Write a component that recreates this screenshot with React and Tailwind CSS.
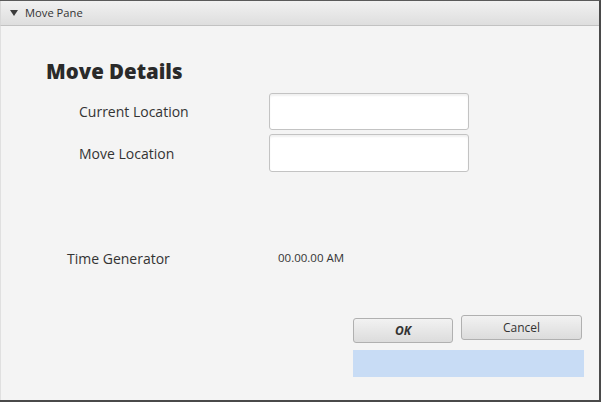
export default function App() {
  return (
    <div
      className="w-[601px] h-[402px] bg-[#f4f4f4] border-t border-t-[#5a5a5a] border-r-2 border-r-[#4a4a4a] border-b-2 border-b-[#4a4a4a] flex flex-col text-[#333]"
      style={{ fontFamily: '"Open Sans", "Noto Sans", sans-serif' }}
    >
      {/* Title bar */}
      <div className="h-[25px] shrink-0 flex items-center bg-gradient-to-b from-[#f1f1f1] to-[#dedede] border-b border-[#c2c2c2] border-l border-l-[#d8d8d8]">
        <span className="ml-[9px] w-0 h-0 border-l-[4px] border-r-[4px] border-t-[6px] border-l-transparent border-r-transparent border-t-[#3c3c3c]" />
        <span className="ml-[7px] text-[11.2px] leading-none text-[#333]">Move Pane</span>
      </div>

      {/* Content */}
      <div className="flex-1 flex flex-col border-l border-l-[#e0e0e0]">
        <h1 className="ml-[45px] mt-[32px] text-[20.4px] font-extrabold leading-[26px] text-[#2a2a2a]">
          Move Details
        </h1>

        <div className="mt-[9px] flex flex-col gap-[4px]">
          <div className="flex items-center">
            <span className="ml-[78px] w-[190px] text-[14px]">Current Location</span>
            <input className="w-[200px] h-[37px] bg-white rounded-[3px] border border-[#c3c3c3] shadow-[inset_0_2px_2px_rgba(0,0,0,0.06)] outline-none" />
          </div>
          <div className="flex items-center">
            <span className="ml-[78px] w-[190px] text-[14px]">Move Location</span>
            <input className="w-[200px] h-[38px] bg-white rounded-[3px] border border-[#c3c3c3] shadow-[inset_0_2px_2px_rgba(0,0,0,0.06)] outline-none" />
          </div>
        </div>

        <div className="mt-[76px] flex items-center h-[20px]">
          <span className="ml-[66px] w-[211px] text-[14px]">Time Generator</span>
          <span className="text-[11.5px]">00.00.00 AM</span>
        </div>

        <div className="mt-[47px] ml-[352px] w-[231px] flex flex-col">
          <div className="flex items-start gap-[8px]">
            <button className="mt-[3px] w-[100px] h-[25px] rounded-[3px] border border-[#b0b0b0] bg-gradient-to-b from-[#f2f2f2] to-[#dcdcdc] text-[12px] font-bold italic text-[#333]">
              OK
            </button>
            <button className="w-[121px] h-[25px] rounded-[3px] border border-[#b0b0b0] bg-gradient-to-b from-[#f2f2f2] to-[#dcdcdc] text-[12px] text-[#333]">
              Cancel
            </button>
          </div>
          <div className="mt-[7px] h-[27px] w-[231px] bg-[#c8dcf5]" />
        </div>
      </div>
    </div>
  );
}
